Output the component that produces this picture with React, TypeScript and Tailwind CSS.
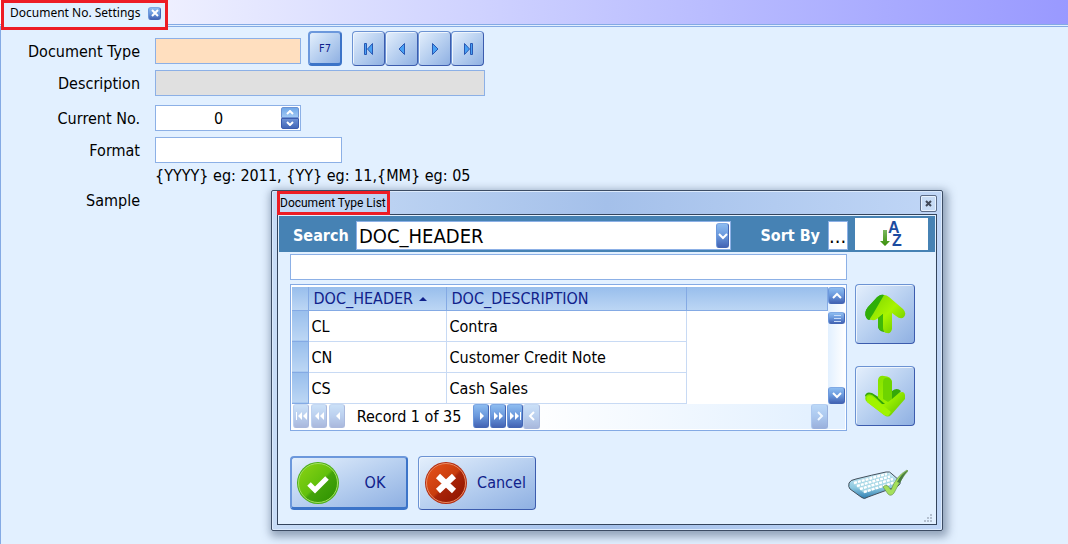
import { useState } from "react";

const fieldClass = "h-[26px] border border-[#8cb0e6] px-1 text-base text-black outline-none";

const glossy =
  "rounded-sm border border-[#6c93d3] border-b-[#3c5cae] border-r-[#3c5cae] bg-linear-to-br from-[#e4effc] via-[#b8d0f0] to-[#8fb0e2] text-[#10218b] shadow-[inset_1px_1px_0_#eef5fd]";

const glossyDefault =
  "rounded-sm border-2 border-[#6c98dc] border-b-[#3c74c8] border-r-[#3c74c8] border-b-3 bg-linear-to-br from-[#e4effc] via-[#b8d0f0] to-[#8fb0e2] text-[#10218b]";

const miniButton =
  "flex items-center justify-center rounded-[3px] border border-[#4466b4] border-t-[#7fa9e4] border-l-[#6c98dc] bg-linear-to-b from-[#8dbcf0] via-[#6a98dc] to-[#4464b4] text-white disabled:opacity-45";

const gridHead = "border-r border-b border-[#84aae4] p-0 pt-0.5 pl-[5px] font-normal leading-5";

const gridCell = "border-r border-b border-[#c8daf4] p-0 pt-0.5 pl-[3px]";

interface GlyphProps {
  d: string;
  width?: number;
  height?: number;
  className?: string;
}

function Glyph({ d, width = 10, height = 10, className = "fill-current" }: GlyphProps) {
  return (
    <svg
      width={width}
      height={height}
      viewBox={`0 0 ${width} ${height}`}
      className={`shrink-0 ${className}`}
      aria-hidden="true"
    >
      <path d={d} />
    </svg>
  );
}

const strokeGlyph = "fill-none stroke-current stroke-2";

const moveButtons = [
  { label: "First", d: "M1.5 1.5h2v11h-2z M9.5 1.5v11l-5-5.5z" },
  { label: "Previous", d: "M8.5 1.5v11l-5.5-5.5z" },
  { label: "Next", d: "M3.5 1.5v11l5.5-5.5z" },
  { label: "Last", d: "M8.5 1.5h2v11h-2z M2.5 1.5v11l5-5.5z" },
];

const backButtons = [
  { label: "First record", d: "M0 1h1v8h-1z M6 1v8l-4-4z M11 1v8l-4-4z" },
  { label: "Previous page", d: "M5 1v8l-4-4z M10 1v8l-4-4z" },
  { label: "Previous record", d: "M8 1v8l-4-4z" },
];

const forwardButtons = [
  { label: "Next record", d: "M4 1v8l4-4z" },
  { label: "Next page", d: "M1 1v8l4-4z M6 1v8l4-4z" },
  { label: "Last record", d: "M0 1v8l4-4z M5 1v8l4-4z M10 1h1v8h-1z" },
];

const documentTypes = [
  { code: "CL", description: "Contra" },
  { code: "CN", description: "Customer Credit Note" },
  { code: "CS", description: "Cash Sales" },
];

function RecordButtons({ items, disabled }: { items: typeof backButtons; disabled?: boolean }) {
  return (
    <>
      {items.map((item) => (
        <button
          key={item.label}
          type="button"
          aria-label={item.label}
          disabled={disabled}
          className={`${miniButton} h-6 w-4 shrink-0`}
        >
          <Glyph d={item.d} width={11} />
        </button>
      ))}
    </>
  );
}

function UpArrow() {
  return (
    <svg width="42" height="42" viewBox="0 0 42 42" aria-hidden="true">
      <defs>
        <linearGradient id="up" x1="0" y1="0" x2="1" y2="1">
          <stop offset="0" stopColor="#7ad400" />
          <stop offset="0.5" stopColor="#a8f400" />
          <stop offset="1" stopColor="#5cc000" />
        </linearGradient>
      </defs>
      <path
        d="M15 3Q17 1 20 2L9 25Q4 29 2 24Q0 19 4 14Z M14 23L20 18V39Q14 38 14 33Z"
        fill="#2fa208"
      />
      <path
        d="M16 4Q20 0 25 4L39 16Q43 20 40 24Q37 27 32 23L28 20V36Q27 41 23 40Q19 40 19 35V21L13 26Q8 29 5 25Q4 22 7 18Z"
        fill="url(#up)"
      />
      <path d="M2 24Q0 19 4 14L13 4Q17 1 20 2L9 21L5 27Q3 27 2 24Z" fill="#2fae08" />
      <path d="M14 25L19 21V38Q14 37 14 33Z" fill="#3fb808" />
    </svg>
  );
}

function DownArrow() {
  return (
    <svg width="42" height="42" viewBox="0 0 42 42" aria-hidden="true">
      <defs>
        <linearGradient id="down" x1="0" y1="0" x2="1" y2="1">
          <stop offset="0" stopColor="#7cdc00" />
          <stop offset="0.6" stopColor="#9cf000" />
          <stop offset="1" stopColor="#58be00" />
        </linearGradient>
      </defs>
      <path d="M28 16Q33 12 37 16L28 27Z M1 21Q2 16 8 18L16 23L8 27Z" fill="#35a808" />
      <path
        d="M14 5Q15 0 20 1Q27 1 28 7V24L35 18Q40 15 41 20V24L27 40Q24 43 20 40L3 27Q0 24 2 21Q4 18 8 20L14 24Z"
        fill="url(#down)"
      />
      <path d="M21 3Q27 2 28 7V24L24 27L19 24V7Q19 4 21 3Z" fill="#6ed400" />
      <path d="M3 22Q6 19 10 23L27 37L24 41L20 40L3 27Z" fill="#a0f400" />
      <path d="M9 20L14 23L21 29L18 29Z" fill="#2fa208" />
    </svg>
  );
}

function OkIcon() {
  return (
    <svg width="44" height="44" viewBox="0 0 44 44" className="shrink-0" aria-hidden="true">
      <defs>
        <linearGradient id="ok" x1="0" y1="0" x2="1" y2="1">
          <stop offset="0" stopColor="#8cd414" />
          <stop offset="0.5" stopColor="#62c00c" />
          <stop offset="0.55" stopColor="#44a40a" />
          <stop offset="1" stopColor="#2c9000" />
        </linearGradient>
      </defs>
      <circle cx="22" cy="22" r="21" fill="#4cae16" />
      <circle cx="22" cy="22" r="19.5" fill="url(#ok)" stroke="#a4e060" />
      <path d="M13 23L19 29L31 17" fill="none" stroke="white" strokeWidth="5" />
    </svg>
  );
}

function CancelIcon() {
  return (
    <svg width="44" height="44" viewBox="0 0 44 44" className="shrink-0" aria-hidden="true">
      <defs>
        <linearGradient id="cancel" x1="0" y1="0" x2="1" y2="1">
          <stop offset="0" stopColor="#e8541c" />
          <stop offset="0.5" stopColor="#c83c0c" />
          <stop offset="0.55" stopColor="#a82408" />
          <stop offset="1" stopColor="#8c1400" />
        </linearGradient>
      </defs>
      <circle cx="22" cy="22" r="21" fill="#b42c10" />
      <circle cx="22" cy="22" r="19.5" fill="url(#cancel)" stroke="#e88c64" />
      <path d="M14 15L30 30M30 15L14 30" fill="none" stroke="white" strokeWidth="6" />
    </svg>
  );
}

function KeyboardIcon() {
  return (
    <svg width="60" height="32" viewBox="0 0 60 32" aria-hidden="true">
      <defs>
        <linearGradient id="kb" x1="0" y1="0" x2="0" y2="1">
          <stop offset="0" stopColor="#d4eef6" />
          <stop offset="0.6" stopColor="#8cc8e0" />
          <stop offset="1" stopColor="#2c7cb0" />
        </linearGradient>
      </defs>
      <path
        d="M1 14Q2 11 8 10Q24 6 38 3Q42 2 44 5L52 12Q53 15 50 17L20 28Q16 31 13 28L2 20Q0 18 1 14Z"
        fill="url(#kb)"
        stroke="#44505c"
      />
      <path d="M4 14L39 4L49 13L16 24Z" fill="#a8d8e6" />
      <g fill="none" stroke="white" strokeWidth="2.4" strokeDasharray="3 1">
        <path d="M6 14L39 5" />
        <path d="M9 17L42 7.5" />
        <path d="M12 20L45 10" />
        <path d="M16 23L48 13" />
      </g>
      <path
        d="M35 18Q37 15 40 17L43 21Q48 7 59 1L60 2Q54 8 46 24Q43 28 40 25Z"
        fill="#a4e05c"
        stroke="#608848"
        strokeWidth="0.6"
      />
      <path d="M49 13Q53 5 60 1Q55 7 52 14Z" fill="#487c40" />
    </svg>
  );
}

function SortIcon() {
  return (
    <svg width="24" height="32" viewBox="0 0 24 32" aria-hidden="true">
      <defs>
        <linearGradient id="sort" x1="0" y1="0" x2="0" y2="1">
          <stop offset="0" stopColor="#7cb860" />
          <stop offset="1" stopColor="#389008" />
        </linearGradient>
      </defs>
      <path d="M3 12h4v11h3l-5 5l-5-5h3z" fill="url(#sort)" />
      <g fontSize="16" fontWeight="700" fill="#1c4ca0" fontFamily="Liberation Sans, sans-serif">
        <text x="8" y="15">A</text>
        <text x="12" y="28">Z</text>
      </g>
    </svg>
  );
}

function DocumentGrid() {
  return (
    <div className="flex w-[557px] border border-[#84aae4] bg-white p-px pt-0.5">
      <div className="min-w-0 flex-1">
        <table className="w-full table-fixed border-collapse text-left text-base">
          <colgroup>
            <col className="w-4" />
            <col className="w-[138px]" />
            <col className="w-[240px]" />
            <col />
          </colgroup>
          <thead>
            <tr className="h-[23px] bg-linear-to-b from-[#98beec] to-[#bcd6f4] text-[#10218b]">
              <th className="border-r border-b border-[#84aae4] p-0" aria-label="Row" />
              <th className={gridHead}>
                <span className="flex items-center gap-1.5">
                  DOC_HEADER
                  <Glyph d="M4 0L8 4H0z" width={8} height={4} />
                </span>
              </th>
              <th className={gridHead}>DOC_DESCRIPTION</th>
              <th className="border-r border-b border-[#84aae4] p-0" aria-label="Unused" />
            </tr>
          </thead>
          <tbody>
            {documentTypes.map((row) => (
              <tr key={row.code} className="h-[31px]">
                <td className="border-r border-b border-[#84aae4] bg-linear-to-b from-[#98beec] to-[#bcd6f4]" />
                <td className={gridCell}>{row.code}</td>
                <td className={gridCell}>{row.description}</td>
                <td />
              </tr>
            ))}
          </tbody>
        </table>
        <div className="flex h-[25px] items-center">
          <div className="flex gap-0.5 pl-px">
            <RecordButtons items={backButtons} disabled />
          </div>
          <span className="w-32 pt-0.5 text-center text-base leading-6">Record 1 of 35</span>
          <div className="flex gap-px">
            <RecordButtons items={forwardButtons} />
          </div>
          <div className="flex flex-1 bg-linear-to-r from-white to-[#e2f0ff]">
            <button type="button" aria-label="Scroll left" disabled className={`${miniButton} h-[25px] w-[17px]`}>
              <Glyph d="M7 1L3 5L7 9" className={strokeGlyph} />
            </button>
            <span className="flex-1" />
            <button type="button" aria-label="Scroll right" disabled className={`${miniButton} h-[25px] w-[17px]`}>
              <Glyph d="M3 1L7 5L3 9" className={strokeGlyph} />
            </button>
          </div>
        </div>
      </div>
      <div className="flex w-[17px] flex-col bg-linear-to-r from-[#e2f0ff] to-white">
        <button type="button" aria-label="Scroll up" className={`${miniButton} h-[17px]`}>
          <Glyph d="M1 7L5 3L9 7" className={strokeGlyph} />
        </button>
        <button type="button" aria-label="Scroll position" className={`${miniButton} mt-2 h-3`}>
          <Glyph d="M2 1.5h7M2 4.5h7M2 7.5h7" height={8} className="fill-none stroke-[#c8dcf8] stroke-1" />
        </button>
        <span className="flex-1" />
        <button type="button" aria-label="Scroll down" className={`${miniButton} h-[17px]`}>
          <Glyph d="M1 3L5 7L9 3" className={strokeGlyph} />
        </button>
        <span className="h-[25px] bg-[#e2f0ff]" />
      </div>
    </div>
  );
}

function DocumentTypeDialog() {
  const [search, setSearch] = useState("");

  return (
    <section
      role="dialog"
      aria-labelledby="dialog-title"
      className="absolute top-[190px] left-[271px] w-[672px] rounded-xs border border-[#3c4c64] bg-linear-to-r from-[#c8dcf6] via-[#a4c0ea] to-[#c0d6f6] px-[5px] pb-[5px] shadow-[2px_3px_8px_3px_rgba(70,90,120,0.5),inset_0_0_0_1px_#dceafc]"
    >
      <header className="flex h-[23px] items-center justify-between">
        <h2
          id="dialog-title"
          className="h-6 w-[113px] border-3 border-[#ed1c24] font-[Roboto,sans-serif] text-xs leading-[18px] whitespace-nowrap text-black"
        >
          Document Type List
        </h2>
        <button
          type="button"
          aria-label="Close"
          className="mt-0.5 flex size-[17px] items-center justify-center rounded-xs border border-[#5c6c88] bg-[#c8dcf6] text-[#404858] shadow-[inset_0_0_0_1px_#e8f2fe]"
        >
          <Glyph d="M1 1L6 6M6 1L1 6" width={7} height={7} className={strokeGlyph} />
        </button>
      </header>

      <div className="border border-[#34445c] bg-[#e2f0ff]">
        <div className="flex h-[37px] items-end border border-b-0 border-[#e2f0ff] bg-[#4682b4] pr-[7px] pb-0.5 pl-3.5 font-bold text-white">
          <label htmlFor="search-by" className="w-[63px] text-base leading-7">
            Search
          </label>
          <div className="relative h-[29px] w-[375px]">
            <select
              id="search-by"
              className="size-full appearance-none border border-[#8cb0e6] bg-white pt-px pl-0.5 text-xl leading-6 font-normal text-black outline-none"
            >
              <option>DOC_HEADER</option>
              <option>DOC_DESCRIPTION</option>
            </select>
            <span className={`${miniButton} pointer-events-none absolute top-0.5 right-0.5 h-[25px] w-[13px]`}>
              <Glyph d="M1 3L5 7L9 3" className={strokeGlyph} />
            </span>
          </div>
          <span className="flex-1 pr-2 text-right text-base leading-7">Sort By</span>
          <button
            type="button"
            aria-label="Choose sort column"
            className="h-[29px] w-5 overflow-hidden border border-[#8cb0e6] bg-white text-left text-xl leading-6 font-normal text-black"
          >
            ...
          </button>
          <button
            type="button"
            aria-label="Sort ascending"
            className="ml-[7px] flex h-8 w-[73px] items-center justify-center bg-white"
          >
            <SortIcon />
          </button>
        </div>

        <div className="flex gap-2 pt-0.5 pl-3">
          <div className="flex flex-col gap-1">
            <input
              type="text"
              aria-label="Search text"
              value={search}
              onChange={(e) => setSearch(e.target.value)}
              className={`${fieldClass} bg-white`}
            />
            <DocumentGrid />
          </div>
          <div className="flex flex-col gap-[22px] pt-[30px]">
            <button type="button" aria-label="Move up" className={`${glossy} flex size-[60px] items-center justify-center`}>
              <UpArrow />
            </button>
            <button type="button" aria-label="Move down" className={`${glossy} flex size-[60px] items-center justify-center`}>
              <DownArrow />
            </button>
          </div>
        </div>

        <footer className="flex items-center pt-[25px] pr-7 pl-3">
          <button type="button" className={`${glossyDefault} flex h-[54px] w-[118px] items-center pt-0.5 pl-1 text-base`}>
            <OkIcon />
            <span className="flex-1 pl-1 text-center">OK</span>
          </button>
          <button type="button" className={`${glossy} ml-2.5 flex h-[54px] w-[118px] items-center pl-[5px] text-base`}>
            <CancelIcon />
            <span className="flex-1 text-center">Cancel</span>
          </button>
          <button type="button" aria-label="On-screen keyboard" className="ml-auto pt-1">
            <KeyboardIcon />
          </button>
        </footer>
        <div className="flex h-3.5 justify-end pt-1 pr-1">
          <Glyph
            d="M6 0h2v2h-2z M3 3h2v2h-2z M6 3h2v2h-2z M0 6h2v2h-2z M3 6h2v2h-2z M6 6h2v2h-2z"
            width={8}
            height={8}
            className="fill-[#b4c0d0]"
          />
        </div>
      </div>
    </section>
  );
}

export default function App() {
  const [documentType, setDocumentType] = useState("");
  const [currentNo, setCurrentNo] = useState(0);
  const [format, setFormat] = useState("");

  return (
    <div className="relative flex min-h-screen flex-col bg-[#e2f0ff] font-['DejaVu_Sans_Condensed','Noto_Sans',sans-serif] text-black">
      <nav className="h-[25px] border-b border-[#84aae4] bg-linear-to-r from-white to-[#9999ff] pl-px">
        <div className="relative flex h-[30px] w-[167px] items-center justify-between border-3 border-[#ed1c24] bg-[#e2f0ff] pr-1 pb-1 pl-1.5">
          <a href="#settings" className="font-['Noto_Sans',sans-serif] text-xs whitespace-nowrap">
            Document No. Settings
          </a>
          <button type="button" aria-label="Close tab" className={`${miniButton} size-[13px] shrink-0`}>
            <Glyph d="M1 1L7 7M7 1L1 7" width={8} height={8} className={strokeGlyph} />
          </button>
        </div>
      </nav>

      <main className="mt-px flex-1 border-t border-l border-[#84aae4] pt-1">
        <form
          className="grid grid-cols-[139px_1fr] items-center gap-x-[15px] text-base"
          onSubmit={(e) => e.preventDefault()}
        >
          <label htmlFor="document-type" className="pt-1.5 text-right">
            Document Type
          </label>
          <div className="flex items-center">
            <input
              id="document-type"
              type="text"
              value={documentType}
              onChange={(e) => setDocumentType(e.target.value)}
              className={`${fieldClass} mt-1 w-[146px] bg-[#ffdfbf]`}
            />
            <button type="button" className={`${glossyDefault} ml-[7px] h-[35px] w-[34px] pt-0.5 text-[11px]`}>
              F7
            </button>
            <div className="ml-2.5 flex">
              {moveButtons.map((item) => (
                <button
                  key={item.label}
                  type="button"
                  aria-label={item.label}
                  className={`${glossy} flex h-[35px] w-[33px] items-center justify-center`}
                >
                  <Glyph d={item.d} width={12} height={14} className="fill-[#48a0f4] stroke-[#2858b4]" />
                </button>
              ))}
            </div>
          </div>

          <label htmlFor="description" className="pt-1.5 text-right">
            Description
          </label>
          <input
            id="description"
            type="text"
            readOnly
            className={`${fieldClass} mt-1 w-[330px] bg-[#e0e0e0]`}
          />

          <label htmlFor="current-no" className="pt-2.5 text-right">
            Current No.
          </label>
          <div className="mt-[9px] flex h-[26px] w-[146px] items-center border border-[#8cb0e6] bg-white pr-px">
            <input
              id="current-no"
              type="text"
              inputMode="numeric"
              value={currentNo}
              onChange={(e) => setCurrentNo(Number(e.target.value) || 0)}
              className="h-6 min-w-0 flex-1 pt-px text-center text-base outline-none"
            />
            <div className="flex flex-col">
              <button
                type="button"
                aria-label="Increase"
                onClick={() => setCurrentNo(currentNo + 1)}
                className="flex h-[11px] w-[18px] items-center justify-center rounded-t-xs border border-[#6c93d3] bg-linear-to-b from-[#70a8e8] to-[#a0c8f4] text-white"
              >
                <Glyph d="M1 4L4 1L7 4" width={8} height={5} className={strokeGlyph} />
              </button>
              <button
                type="button"
                aria-label="Decrease"
                onClick={() => setCurrentNo(currentNo - 1)}
                className="flex h-[11px] w-[18px] items-center justify-center rounded-b-xs border border-[#3c5cae] bg-linear-to-b from-[#6c90d4] to-[#4468b8] text-white"
              >
                <Glyph d="M1 1L4 4L7 1" width={8} height={5} className={strokeGlyph} />
              </button>
            </div>
          </div>

          <label htmlFor="format" className="pt-2 text-right">
            Format
          </label>
          <input
            id="format"
            type="text"
            value={format}
            onChange={(e) => setFormat(e.target.value)}
            className={`${fieldClass} mt-1.5 w-[187px] bg-white`}
          />

          <p className="col-start-2 pt-px leading-6">{"{YYYY} eg: 2011, {YY} eg: 11,{MM} eg: 05"}</p>
          <span className="pt-px text-right leading-6">Sample</span>
        </form>
      </main>

      <DocumentTypeDialog />
    </div>
  );
}
